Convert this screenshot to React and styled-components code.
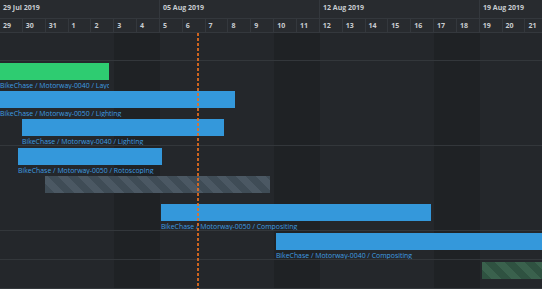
import React from "react";
import styled, { createGlobalStyle } from "styled-components";

const DAY = 160 / 7;

const GlobalStyle = createGlobalStyle`
  html, body {
    margin: 0;
    padding: 0;
    background: #24272b;
    overflow: hidden;
  }
`;

const Chart = styled.div`
  width: 542px;
  height: 289px;
  overflow: hidden;
  background: #24272b;
  font-family: "Open Sans", "Liberation Sans", sans-serif;
`;

const Header = styled.div`
  background: #282b2f;
  width: max-content;
`;

const WeekRow = styled.div`
  display: flex;
  height: 18px;
  border-bottom: 1px solid #34383d;
`;

const WeekCell = styled.div`
  flex-shrink: 0;
  box-sizing: border-box;
  border-right: 1px solid #34383d;
  padding: 3px 0 0 3px;
  font-size: 7px;
  font-weight: 700;
  color: #c9cdd1;
  white-space: nowrap;
`;

const DayRow = styled.div`
  display: flex;
  height: 13px;
  border-bottom: 1px solid #34383d;
`;

const DayCell = styled.div`
  flex-shrink: 0;
  box-sizing: border-box;
  border-right: 1px solid #34383d;
  padding-left: 3px;
  font-size: 7px;
  font-weight: 700;
  line-height: 13px;
  color: #c9cdd1;
`;

const Body = styled.div`
  position: relative;
  height: 256px;
`;

const Columns = styled.div`
  position: absolute;
  inset: 0;
  display: flex;
`;

const DayColumn = styled.div`
  flex-shrink: 0;
  height: 100%;
  background: ${(p) => (p.$weekend ? "#1f2225" : "transparent")};
`;

const Rows = styled.div`
  position: relative;
  display: flex;
  flex-direction: column;
`;

const Row = styled.div`
  display: flex;
  flex-direction: column;
  min-height: ${(p) => p.$min || 0}px;
  border-bottom: 1px solid #33373b;
`;

const Slot = styled.div`
  height: 28px;
  display: flex;
  flex-direction: column;
  padding-top: 2px;
  box-sizing: border-box;
`;

const Bar = styled.div`
  height: 17px;
  flex-shrink: 0;
  background: ${(p) =>
    p.$kind === "green"
      ? "#2ecc71"
      : p.$kind === "grey"
      ? "repeating-linear-gradient(45deg, #3f4c56 0 7px, #4b5863 7px 14px)"
      : p.$kind === "greenStripe"
      ? "repeating-linear-gradient(45deg, #2f5241 0 7px, #3a614d 7px 14px)"
      : "#3498db"};
`;

const Label = styled.div`
  margin-top: 1px;
  font-size: 6.9px;
  line-height: 9px;
  color: #3f9de0;
  white-space: nowrap;
  overflow: hidden;
`;

const TodayLine = styled.div`
  position: absolute;
  top: 0;
  bottom: 0;
  width: 1.5px;
  background: repeating-linear-gradient(
    to bottom,
    rgba(235, 110, 30, 0.85) 0 3px,
    transparent 3px 5px
  );
  pointer-events: none;
`;

const days = [29, 30, 31, ...Array.from({ length: 21 }, (_, i) => i + 1)];
const weeks = ["29 Jul 2019", "05 Aug 2019", "12 Aug 2019", "19 Aug 2019"];

const rows = [
  { min: 27, tasks: [] },
  {
    tasks: [
      { start: 0, end: 4.77, kind: "green", label: "BikeChase / Motorway-0040 / Layout" },
      { start: 0, end: 10.28, label: "BikeChase / Motorway-0050 / Lighting" },
      { start: 0.96, end: 9.8, label: "BikeChase / Motorway-0040 / Lighting" },
    ],
  },
  {
    tasks: [
      { start: 0.79, end: 7.09, label: "BikeChase / Motorway-0050 / Rotoscoping" },
      { start: 1.97, end: 11.81, kind: "grey", label: "" },
      { start: 7.04, end: 18.86, label: "BikeChase / Motorway-0050 / Compositing" },
    ],
  },
  {
    tasks: [{ start: 12.07, end: 25, label: "BikeChase / Motorway-0040 / Compositing" }],
  },
  {
    tasks: [{ start: 21.09, end: 25, kind: "greenStripe", label: "" }],
  },
];

export default function App() {
  return (
    <Chart>
      <GlobalStyle />
      <Header>
        <WeekRow>
          {weeks.map((w) => (
            <WeekCell key={w} style={{ width: DAY * 7 }}>
              {w}
            </WeekCell>
          ))}
        </WeekRow>
        <DayRow>
          {days.map((d, i) => (
            <DayCell key={i} style={{ width: DAY }}>
              {d}
            </DayCell>
          ))}
        </DayRow>
      </Header>
      <Body>
        <Columns>
          {days.map((d, i) => (
            <DayColumn key={i} $weekend={i % 7 === 5 || i % 7 === 6} style={{ width: DAY }} />
          ))}
        </Columns>
        <Rows>
          {rows.map((r, ri) => (
            <Row key={ri} $min={r.min}>
              {r.tasks.map((t, ti) => (
                <Slot key={ti}>
                  <Bar
                    $kind={t.kind}
                    style={{ marginLeft: t.start * DAY, width: (t.end - t.start) * DAY }}
                  />
                  <Label style={{ marginLeft: t.start * DAY, width: (t.end - t.start) * DAY }}>
                    {t.label}
                  </Label>
                </Slot>
              ))}
            </Row>
          ))}
        </Rows>
        <TodayLine style={{ left: 8.63 * DAY }} />
      </Body>
    </Chart>
  );
}
